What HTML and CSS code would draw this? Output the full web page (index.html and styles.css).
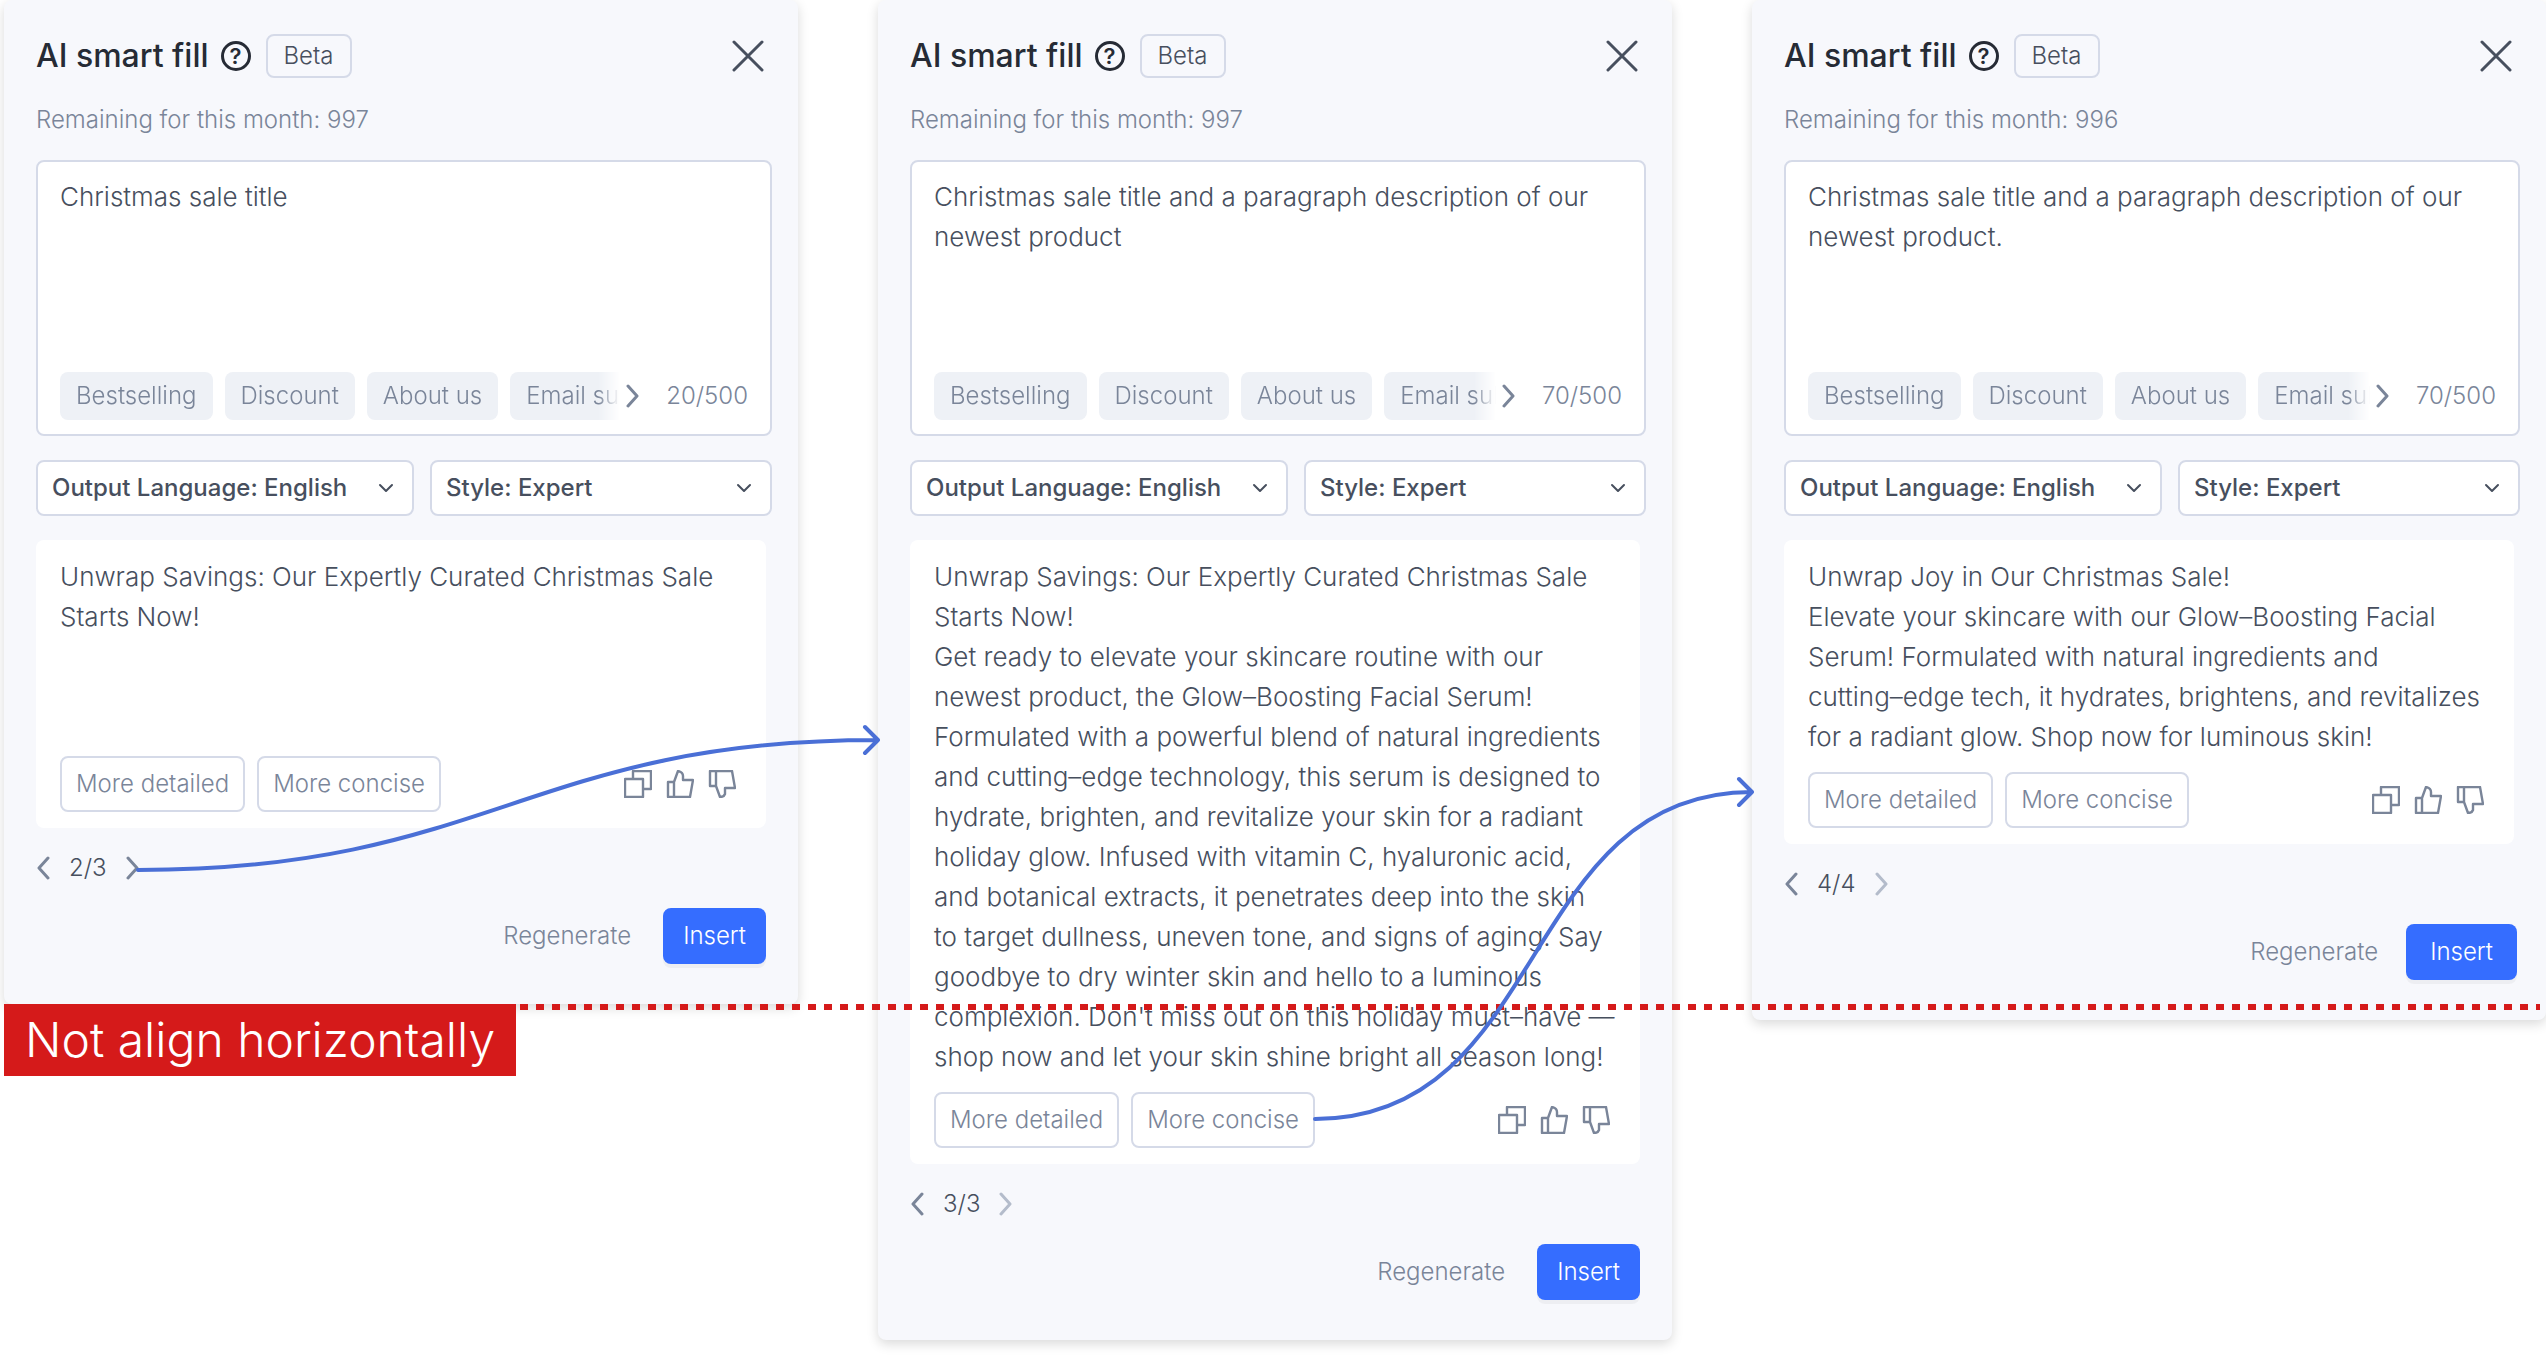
FILE: index.html
```
<!DOCTYPE html>
<html lang="en">
  <head>
    <meta charset="UTF-8">
    <meta name="viewport" content="width=device-width, initial-scale=1.0">
    <title>AI smart fill</title>
    <link rel="stylesheet" href="styles.css">
  </head>
  <body>
    <svg class="sprite" aria-hidden="true">
      <symbol id="icon-close" viewBox="0 0 32 32">
        <path d="M2 2L30 30M30 2L2 30" />
      </symbol>
      <symbol id="icon-left" viewBox="0 0 14 24">
        <path d="M12 2L3 12L12 22" />
      </symbol>
      <symbol id="icon-right" viewBox="0 0 14 24">
        <path d="M2 2L11 12L2 22" />
      </symbol>
      <symbol id="icon-down" viewBox="0 0 16 10">
        <path d="M2 2L8 8L14 2" />
      </symbol>
      <symbol id="icon-copy" viewBox="0 0 28 28">
        <path d="M1 9H19V27H1ZM9 9V1H27V19H19" />
      </symbol>
      <symbol id="icon-up" viewBox="0 0 28 28">
        <path d="M2 12H8V27H2ZM8 12L12 1Q17 2 17 6V10H27L24 27H8" />
      </symbol>
      <symbol id="icon-dislike" viewBox="0 0 28 28">
        <path d="M2 1H8V16H2ZM8 1H24L27 18H17V24Q16 27 12 27L8 16" />
      </symbol>
    </svg>

    <main class="board">
      <section class="panel">
        <header class="panel-header">
          <h2>AI smart fill</h2>
          <button class="help" aria-label="Help">?</button>
          <span class="badge">Beta</span>
          <button class="close" aria-label="Close"><svg><use href="#icon-close" /></svg></button>
        </header>
        <p class="remaining">Remaining for this month: 997</p>

        <div class="composer">
          <textarea aria-label="Prompt">Christmas sale title</textarea>
          <div class="composer-footer">
            <div class="chips">
              <button class="chip">Bestselling</button>
              <button class="chip">Discount</button>
              <button class="chip">About us</button>
              <button class="chip">Email subject</button>
            </div>
            <button class="arrow" aria-label="More topics"><svg><use href="#icon-right" /></svg></button>
            <span class="counter">20/500</span>
          </div>
        </div>

        <div class="options">
          <div class="select language">
            <select aria-label="Output language"><option>Output Language: English</option></select>
            <svg><use href="#icon-down" /></svg>
          </div>
          <div class="select">
            <select aria-label="Style"><option>Style: Expert</option></select>
            <svg><use href="#icon-down" /></svg>
          </div>
        </div>

        <div class="result">
          <p class="result-text">Unwrap Savings: Our Expertly Curated Christmas Sale Starts Now!</p>
          <div class="result-footer">
            <button class="outline">More detailed</button>
            <button class="outline">More concise</button>
            <div class="feedback">
              <button aria-label="Copy"><svg><use href="#icon-copy" /></svg></button>
              <button aria-label="Like"><svg><use href="#icon-up" /></svg></button>
              <button aria-label="Dislike"><svg><use href="#icon-dislike" /></svg></button>
            </div>
          </div>
        </div>

        <nav class="pager">
          <button class="arrow" aria-label="Previous"><svg><use href="#icon-left" /></svg></button>
          <span>2/3</span>
          <button class="arrow" aria-label="Next"><svg><use href="#icon-right" /></svg></button>
        </nav>

        <footer class="actions">
          <button class="regenerate">Regenerate</button>
          <button class="insert">Insert</button>
        </footer>
      </section>

      <section class="panel">
        <header class="panel-header">
          <h2>AI smart fill</h2>
          <button class="help" aria-label="Help">?</button>
          <span class="badge">Beta</span>
          <button class="close" aria-label="Close"><svg><use href="#icon-close" /></svg></button>
        </header>
        <p class="remaining">Remaining for this month: 997</p>

        <div class="composer">
          <textarea aria-label="Prompt">Christmas sale title and a paragraph description of our newest product</textarea>
          <div class="composer-footer">
            <div class="chips">
              <button class="chip">Bestselling</button>
              <button class="chip">Discount</button>
              <button class="chip">About us</button>
              <button class="chip">Email subject</button>
            </div>
            <button class="arrow" aria-label="More topics"><svg><use href="#icon-right" /></svg></button>
            <span class="counter">70/500</span>
          </div>
        </div>

        <div class="options">
          <div class="select language">
            <select aria-label="Output language"><option>Output Language: English</option></select>
            <svg><use href="#icon-down" /></svg>
          </div>
          <div class="select">
            <select aria-label="Style"><option>Style: Expert</option></select>
            <svg><use href="#icon-down" /></svg>
          </div>
        </div>

        <div class="result">
          <p class="result-text">Unwrap Savings: Our Expertly Curated Christmas Sale Starts Now!<br>
            Get ready to elevate your skincare routine with our newest product, the Glow–Boosting Facial Serum! Formulated with a powerful blend of natural ingredients and cutting–edge technology, this serum is designed to hydrate, brighten, and revitalize your skin for a radiant holiday glow. Infused with vitamin C, hyaluronic acid, and botanical extracts, it penetrates deep into the skin<br>
            to target dullness, uneven tone, and signs of aging. Say goodbye to dry winter skin and hello to a luminous complexion. Don't miss out on this holiday must–have — shop now and let your skin shine bright all season long!</p>
          <div class="result-footer">
            <button class="outline">More detailed</button>
            <button class="outline">More concise</button>
            <div class="feedback">
              <button aria-label="Copy"><svg><use href="#icon-copy" /></svg></button>
              <button aria-label="Like"><svg><use href="#icon-up" /></svg></button>
              <button aria-label="Dislike"><svg><use href="#icon-dislike" /></svg></button>
            </div>
          </div>
        </div>

        <nav class="pager">
          <button class="arrow" aria-label="Previous"><svg><use href="#icon-left" /></svg></button>
          <span>3/3</span>
          <button class="arrow" aria-label="Next" disabled><svg><use href="#icon-right" /></svg></button>
        </nav>

        <footer class="actions">
          <button class="regenerate">Regenerate</button>
          <button class="insert">Insert</button>
        </footer>
      </section>

      <section class="panel">
        <header class="panel-header">
          <h2>AI smart fill</h2>
          <button class="help" aria-label="Help">?</button>
          <span class="badge">Beta</span>
          <button class="close" aria-label="Close"><svg><use href="#icon-close" /></svg></button>
        </header>
        <p class="remaining">Remaining for this month: 996</p>

        <div class="composer">
          <textarea aria-label="Prompt">Christmas sale title and a paragraph description of our newest product.</textarea>
          <div class="composer-footer">
            <div class="chips">
              <button class="chip">Bestselling</button>
              <button class="chip">Discount</button>
              <button class="chip">About us</button>
              <button class="chip">Email subject</button>
            </div>
            <button class="arrow" aria-label="More topics"><svg><use href="#icon-right" /></svg></button>
            <span class="counter">70/500</span>
          </div>
        </div>

        <div class="options">
          <div class="select language">
            <select aria-label="Output language"><option>Output Language: English</option></select>
            <svg><use href="#icon-down" /></svg>
          </div>
          <div class="select">
            <select aria-label="Style"><option>Style: Expert</option></select>
            <svg><use href="#icon-down" /></svg>
          </div>
        </div>

        <div class="result">
          <p class="result-text">Unwrap Joy in Our Christmas Sale!<br>
            Elevate your skincare with our Glow–Boosting Facial Serum! Formulated with natural ingredients and<br>
            cutting–edge tech, it hydrates, brightens, and revitalizes for a radiant glow. Shop now for luminous skin!</p>
          <div class="result-footer">
            <button class="outline">More detailed</button>
            <button class="outline">More concise</button>
            <div class="feedback">
              <button aria-label="Copy"><svg><use href="#icon-copy" /></svg></button>
              <button aria-label="Like"><svg><use href="#icon-up" /></svg></button>
              <button aria-label="Dislike"><svg><use href="#icon-dislike" /></svg></button>
            </div>
          </div>
        </div>

        <nav class="pager">
          <button class="arrow" aria-label="Previous"><svg><use href="#icon-left" /></svg></button>
          <span>4/4</span>
          <button class="arrow" aria-label="Next" disabled><svg><use href="#icon-right" /></svg></button>
        </nav>

        <footer class="actions">
          <button class="regenerate">Regenerate</button>
          <button class="insert wide">Insert</button>
        </footer>
      </section>

      <!-- review notes on top of the panels -->
      <svg class="notes" viewBox="0 0 2546 1358" aria-hidden="true">
        <path class="guide" d="M8 1007H2540" />
        <path class="flow" d="M138 870C488 870 530 740 878 740M865 727L878 740L865 753" />
        <path class="flow" d="M1315 1119C1549 1119 1519 792 1752 792M1739 779L1752 792L1739 805" />
      </svg>
      <strong class="note-label">Not align horizontally</strong>
    </main>
  </body>
</html>
```
FILE: styles.css
```
* {
  box-sizing: border-box;
}

body {
  margin: 0;
  background: #fff;
  color: #474f5e;
  font-family: Inter, "Liberation Sans", sans-serif;
  font-size: 24px;
  font-weight: 300;
  line-height: 32px;
}

button,
select,
textarea {
  font: inherit;
  color: inherit;
}

button {
  padding: 0;
  border: none;
  background: none;
  cursor: pointer;
  white-space: nowrap;
}

svg {
  display: block;
  fill: none;
  stroke: currentColor;
  stroke-width: 2;
  stroke-linecap: round;
  stroke-linejoin: round;
}

.sprite {
  position: absolute;
  width: 0;
  height: 0;
}

.board {
  position: relative;
  display: grid;
  grid-template-columns: repeat(3, minmax(0, 1fr));
  align-items: start;
  gap: 80px;
  padding: 0 0 18px 4px;
  overflow: hidden;
}

.panel {
  padding: 34px 26px 40px 32px;
  background: #f7f8fc;
  border-radius: 8px;
  box-shadow: 0 4px 12px rgba(0, 0, 0, 0.15);
}

.panel-header {
  display: flex;
  align-items: center;
}

.panel-header h2 {
  margin: 0;
  font-size: 32px;
  font-weight: 500;
  line-height: 44px;
  color: #262b35;
}

.help {
  width: 30px;
  height: 30px;
  margin: 0 15px 0 12px;
  border: 3px solid #262b35;
  border-radius: 50%;
  color: #262b35;
  font-size: 22px;
  font-weight: 600;
  line-height: 24px;
}

.badge {
  padding: 4px 16px;
  border: 2px solid #d5dae8;
  border-radius: 8px;
}

.close {
  margin: 0 8px 0 auto;
}

.close svg {
  width: 32px;
  height: 32px;
  stroke-width: 3;
}

.remaining {
  margin: 26px 0 24px;
  color: #7a8599;
}

.composer {
  padding: 15px 22px 14px;
  background: #fff;
  border: 2px solid #d5dae8;
  border-radius: 8px;
}

.composer textarea {
  display: block;
  width: 100%;
  height: 195px;
  padding: 0;
  border: none;
  outline: none;
  resize: none;
  background: none;
  font-size: 26px;
  line-height: 40px;
}

.composer-footer {
  display: flex;
  align-items: center;
  color: #7a8599;
}

.chips {
  display: flex;
  flex: 1;
  gap: 12px;
  min-width: 0;
  overflow: hidden;
  -webkit-mask-image: linear-gradient(to left, transparent 6px, #000 28px);
  mask-image: linear-gradient(to left, transparent 6px, #000 28px);
}

.chip {
  flex: none;
  padding: 8px 16px;
  background: #eef1f6;
  border-radius: 8px;
}

.arrow {
  color: #7a8599;
}

.arrow svg {
  width: 14px;
  height: 24px;
  stroke-width: 3;
}

.arrow:disabled {
  color: #b4bccb;
}

.counter {
  margin-left: 26px;
}

.options {
  display: flex;
  gap: 16px;
  margin: 24px 0;
}

.select {
  position: relative;
  flex: 19 1 0;
}

.select.language {
  flex-grow: 21;
}

.select select {
  appearance: none;
  display: block;
  width: 100%;
  height: 56px;
  padding: 0 48px 0 14px;
  background: #fff;
  border: 2px solid #d5dae8;
  border-radius: 8px;
  font-weight: 500;
}

.select svg {
  position: absolute;
  top: 23px;
  right: 20px;
  width: 16px;
  height: 10px;
  pointer-events: none;
}

.result {
  margin-right: 6px;
  padding: 17px 24px 16px;
  background: #fff;
  border-radius: 8px;
}

.result-text {
  min-height: 184px;
  margin: 0 0 15px;
  font-size: 26px;
  line-height: 40px;
}

.result-footer {
  display: flex;
  gap: 12px;
}

.outline {
  height: 56px;
  padding: 0 14px;
  border: 2px solid #d5dae8;
  border-radius: 8px;
  color: #7a8599;
}

.feedback {
  display: flex;
  gap: 14px;
  margin: 0 6px 0 auto;
  color: #7a8599;
}

.feedback svg {
  width: 28px;
  height: 28px;
  overflow: visible;
  stroke-width: 2.4;
}

.pager {
  display: flex;
  align-items: center;
  gap: 19px;
  height: 40px;
  margin: 20px 0;
}

.actions {
  display: flex;
  justify-content: flex-end;
  gap: 32px;
  margin-right: 6px;
}

.regenerate {
  color: #7a8599;
}

.insert {
  height: 56px;
  padding: 0 20px;
  background: #356dff;
  border-radius: 8px;
  box-shadow: 0 4px 0 rgba(0, 0, 0, 0.04);
  color: #fff;
}

.insert.wide {
  margin: 0 -3px 0 -4px;
  padding: 0 24px;
}

.notes {
  position: absolute;
  top: 0;
  left: 0;
  width: 100%;
  pointer-events: none;
}

.guide {
  stroke: #d51a1a;
  stroke-width: 6;
  stroke-linecap: butt;
  stroke-dasharray: 8 8;
}

.flow {
  stroke: #4a6fd6;
  stroke-width: 4;
}

.note-label {
  position: absolute;
  top: 1004px;
  left: 4px;
  padding: 0 21px;
  background: #d51a1a;
  color: #fff;
  font-size: 48px;
  font-weight: 300;
  line-height: 72px;
}
```
